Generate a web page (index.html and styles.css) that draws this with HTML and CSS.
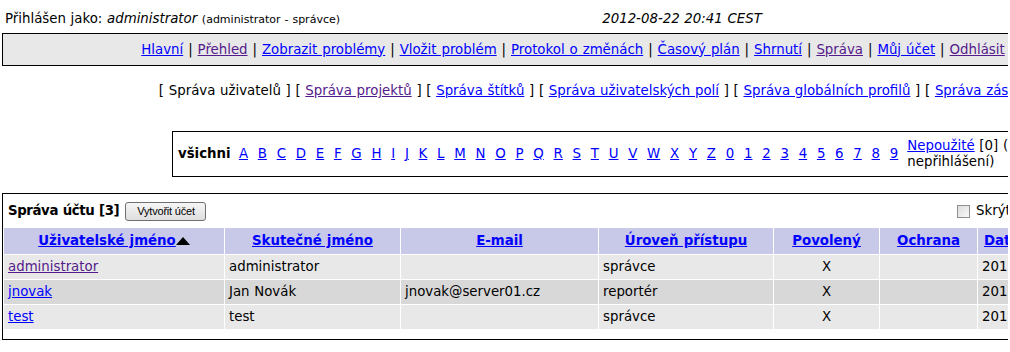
FILE: index.html
```html
<!DOCTYPE html>
<html lang="cs">
<head>
<meta charset="utf-8">
<title>Správa uživatelů</title>
<link rel="stylesheet" href="styles.css">
</head>
<body>
<div class="page">
  <div class="login-info">
    <div class="login-left">Přihlášen jako: <span class="italic">administrator</span> <span class="small">(administrator - správce)</span></div>
    <div class="login-middle"><span class="italic">2012-08-22 20:41 CEST</span></div>
    <div class="login-right">Projekt: <span class="select">Všechny projekty</span> <span class="btn">Přepnout</span></div>
  </div>

  <div class="menu">
    <div class="menu-links"><a href="#">Hlavní</a> | <a class="visited" href="#">Přehled</a> | <a href="#">Zobrazit problémy</a> | <a href="#">Vložit problém</a> | <a href="#">Protokol o změnách</a> | <a href="#">Časový plán</a> | <a href="#">Shrnutí</a> | <a class="visited" href="#">Správa</a> | <a href="#">Můj účet</a> | <a class="visited" href="#">Odhlásit</a></div>
    <div class="menu-jump"><span class="textbox"></span><span class="btn">Skok</span></div>
  </div>

  <div class="submenu">[ Správa uživatelů ] [ <a class="visited" href="#">Správa projektů</a> ] [ <a href="#">Správa štítků</a> ] [ <a href="#">Správa uživatelských polí</a> ] [ <a href="#">Správa globálních profilů</a> ] [ <a href="#">Správa zásuvných modulů</a> ] [ <a href="#">Konfigurace</a> ]</div>

  <div class="alpha">
    <div class="alpha-letters">
      <strong>všichni</strong>
      <a href="#">A</a><a href="#">B</a><a href="#">C</a><a href="#">D</a><a href="#">E</a><a href="#">F</a><a href="#">G</a><a href="#">H</a><a href="#">I</a><a href="#">J</a><a href="#">K</a><a href="#">L</a><a href="#">M</a><a href="#">N</a><a href="#">O</a><a href="#">P</a><a href="#">Q</a><a href="#">R</a><a href="#">S</a><a href="#">T</a><a href="#">U</a><a href="#">V</a><a href="#">W</a><a href="#">X</a><a href="#">Y</a><a href="#">Z</a><a href="#">0</a><a href="#">1</a><a href="#">2</a><a href="#">3</a><a href="#">4</a><a href="#">5</a><a href="#">6</a><a href="#">7</a><a href="#">8</a><a href="#">9</a>
    </div>
    <div class="alpha-unused"><a href="#">Nepoužité</a> [0] (nikdy nepřihlášení)</div>
    <div class="alpha-new"><a href="#">Nové</a> [0] (1 týden)</div>
  </div>

  <table class="users">
    <tr class="title-row">
      <td colspan="8">
        <div class="title-bar">
          <div class="title-left"><strong class="title">Správa účtu [3]</strong><span class="btn create">Vytvořit účet</span></div>
          <div class="title-right"><span class="check"></span>Skrýt neaktivní <span class="check"></span>Zobrazit zakázané <span class="btn">Filtr</span></div>
        </div>
      </td>
    </tr>
    <tr class="row-category">
      <th class="c-user"><a href="#">Uživatelské jméno</a><svg class="sort" width="14" height="8" viewBox="0 0 14 8"><polygon points="7,0 14,8 0,8" fill="#000"/></svg></th>
      <th class="c-real"><a href="#">Skutečné jméno</a></th>
      <th class="c-mail"><a href="#">E-mail</a></th>
      <th class="c-level"><a href="#">Úroveň přístupu</a></th>
      <th class="c-enabled"><a href="#">Povolený</a></th>
      <th class="c-protected"><a href="#">Ochrana</a></th>
      <th class="c-created"><a href="#">Datum vytvoření</a></th>
      <th class="c-visit"><a href="#">Poslední návštěva</a></th>
    </tr>
    <tr class="row-light">
      <td><a class="visited" href="#">administrator</a></td>
      <td>administrator</td>
      <td></td>
      <td>správce</td>
      <td class="center">X</td>
      <td></td>
      <td>2012-08-20</td>
      <td>2012-08-22</td>
    </tr>
    <tr class="row-dark">
      <td><a href="#">jnovak</a></td>
      <td>Jan Novák</td>
      <td>jnovak@server01.cz</td>
      <td>reportér</td>
      <td class="center">X</td>
      <td></td>
      <td>2012-08-22</td>
      <td>2012-08-22</td>
    </tr>
    <tr class="row-light">
      <td><a href="#">test</a></td>
      <td>test</td>
      <td></td>
      <td>správce</td>
      <td class="center">X</td>
      <td></td>
      <td>2012-08-22</td>
      <td>2012-08-22</td>
    </tr>
    <tr class="spacer-row"><td colspan="8"></td></tr>
  </table>
</div>
</body>
</html>
```
FILE: styles.css
```css
html {
  overflow: hidden;
  background: #ffffff;
}

body {
  margin: 6px 2px;
  font-family: "DejaVu Sans", Verdana, sans-serif;
  font-size: 13.33px;
  line-height: 16px;
  word-spacing: 0.45px;
  color: #000000;
}

.page {
  width: 1360px;
}

a {
  color: #0000ff;
  text-decoration: underline;
}

a.visited {
  color: #551a8b;
}

.italic {
  font-style: italic;
}

.small {
  font-size: 11px;
}

/* login info */
.login-info {
  display: grid;
  grid-template-columns: 1fr 1fr 1fr;
  align-items: center;
  height: 26px;
}

.login-left {
  padding-left: 3px;
  white-space: nowrap;
}

.login-middle {
  text-align: center;
}

.login-right {
  text-align: right;
  white-space: nowrap;
}

.select {
  display: inline-block;
  border: 1px solid #7f9db9;
  padding: 0 20px 0 3px;
  font-size: 12px;
}

.btn {
  display: inline-block;
  font-family: "Liberation Sans", Arial, sans-serif;
  font-size: 11px;
  line-height: 15px;
  word-spacing: 0;
  padding: 1px 10px 1px 11px;
  border: 1px solid #707070;
  border-radius: 3px;
  background: linear-gradient(#f6f6f6, #dedede);
  color: #000;
}

/* menu */
.menu {
  margin-top: 1px;
  display: flex;
  align-items: center;
  height: 33px;
  box-sizing: border-box;
  border: 1px solid #000000;
  background: #e8e8e8;
}

.menu-links {
  flex: 1;
  text-align: center;
  white-space: nowrap;
  word-spacing: 0.7px;
}

.menu-jump {
  width: 218px;
  display: flex;
  align-items: center;
  justify-content: flex-end;
  gap: 4px;
  padding-right: 4px;
  box-sizing: border-box;
}

.textbox {
  display: inline-block;
  width: 60px;
  height: 18px;
  border: 1px solid #7f9db9;
  background: #fff;
}

/* manage submenu */
.submenu {
  margin-top: 17px;
  padding-left: 20px;
  text-align: center;
  white-space: nowrap;
}

/* alphabet filter */
.alpha {
  margin: 32px auto 0;
  width: 1020px;
  height: 46px;
  box-sizing: border-box;
  border: 1px solid #000000;
  display: flex;
  align-items: center;
  padding: 1px;
}

.alpha-letters {
  display: flex;
  align-items: center;
  gap: 9.75px;
  padding: 4px;
  white-space: nowrap;
}

.alpha-letters strong {
  margin-right: -1.5px;
}

.alpha-unused {
  width: 170px;
  padding: 4px;
  margin-left: 1px;
}

.alpha-new {
  flex: 1;
  padding: 4px;
  margin-left: 1px;
}

/* users table */
.users {
  margin-top: 16px;
  width: 1360px;
  border: 1px solid #000000;
  border-spacing: 1px;
}

.users td,
.users th {
  padding: 0 4px;
  text-align: left;
  white-space: nowrap;
}

.title-row td {
  height: 32px;
  padding: 0 4px;
}

.title-bar {
  display: flex;
  align-items: center;
  justify-content: space-between;
}

.title-left {
  display: flex;
  align-items: center;
  gap: 6px;
}

.title {
  letter-spacing: -0.4px;
}

.btn.create {
  padding: 1px 10px 1px 11px;
  letter-spacing: -0.2px;
}

.title-right {
  display: flex;
  align-items: center;
  gap: 6px;
  padding-right: 84px;
}

.check {
  display: inline-block;
  width: 11px;
  height: 11px;
  border: 1px solid #8f8f8f;
  background: linear-gradient(135deg, #dcdcdc, #fbfbfb);
}

.row-category th {
  height: 26px;
  background: #c8c8e8;
  font-weight: bold;
  text-align: center;
}

.sort {
  vertical-align: 0;
  margin-left: 0;
}

.row-light td {
  height: 24px;
  background: #e8e8e8;
}

.row-dark td {
  height: 24px;
  background: #d8d8d8;
}

.users td.center {
  text-align: center;
}

.spacer-row td {
  height: 8px;
  padding: 0;
}

.c-user { width: 212px; }
.c-real { width: 167px; }
.c-mail { width: 189px; }
.c-level { width: 166px; }
.c-enabled { width: 97px; }
.c-protected { width: 89px; }
.c-created { width: 130px; }
```
